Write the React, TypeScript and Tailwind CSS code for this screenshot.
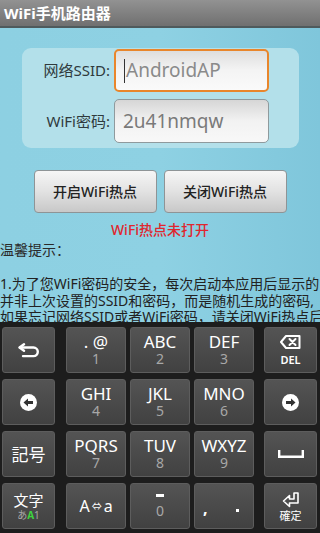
import type { ReactNode } from 'react';

const cjk = { fontFamily: '"Noto Sans", "Noto Sans CJK SC", sans-serif' };
const jp = { fontFamily: '"Noto Sans", "Noto Sans CJK JP", sans-serif' };

function Key({ w, children, className = '' }: { w: string; children?: ReactNode; className?: string }) {
  return (
    <div
      className={`${w} h-[46px] shrink-0 rounded-[3px] border border-[#5d5d5d] bg-gradient-to-b from-[#545454] to-[#414141] flex flex-col items-center justify-center text-white ${className}`}
    >
      {children}
    </div>
  );
}

function Letter({ top, num }: { top: string; num: string }) {
  return (
    <>
      <span className="text-[17px] leading-[18px]">{top}</span>
      <span className="text-[14px] leading-[16px] text-[#a8a8a8]">{num}</span>
    </>
  );
}

function Row({ keys }: { keys: ReactNode[] }) {
  return (
    <div className="flex pl-[2px]">
      <Key w="w-[53px]">{keys[0]}</Key>
      <div className="ml-[11px] flex gap-[4px]">
        <Key w="w-[60px]">{keys[1]}</Key>
        <Key w="w-[60px]">{keys[2]}</Key>
        <Key w="w-[60px]">{keys[3]}</Key>
      </div>
      <Key w="w-[53px] ml-[10px]">{keys[4]}</Key>
    </div>
  );
}

const CircleArrow = ({ dir }: { dir: 'l' | 'r' }) => (
  <svg width="17" height="17" viewBox="0 0 17 17">
    <circle cx="8.5" cy="8.5" r="8.5" fill="#fff" />
    <g transform={dir === 'r' ? 'translate(17 0) scale(-1 1)' : undefined}>
      <path d="M3.5 8.5 L8 4.5 V7 H13 V10 H8 V12.5 Z" fill="#333" />
    </g>
  </svg>
);

export default function App() {
  return (
    <div className="w-[320px] h-[533px] overflow-hidden flex flex-col bg-[#8bcfe2]" style={cjk}>
      {/* title bar */}
      <div className="h-[28px] shrink-0 bg-gradient-to-b from-[#929292] to-[#707070] border-b-2 border-[#4f5a5c] flex items-center pl-[4px]">
        <span className="text-white text-[15px] font-bold leading-none">WiFi手机路由器</span>
      </div>

      {/* content */}
      <div className="h-[294px] shrink-0 overflow-hidden bg-gradient-to-r from-[#8dd0e2] via-[#8ed1e3] to-[#7fc6db]">
        <div className="mt-[20px] ml-[22px] w-[277px] h-[100px] rounded-[9px] bg-[#b3e0ea] pt-[1px] flex flex-col gap-[7px]">
          <div className="flex items-center">
            <span className="w-[88px] text-right text-[15px] text-[#2f3a3d] leading-none">网络SSID:</span>
            <div className="ml-[4px] w-[155px] h-[43px] rounded-[5px] border-2 border-[#e9862c] bg-gradient-to-b from-[#dedede] via-[#f4f4f4] to-[#fafafa] flex items-center pl-[8px]">
              <span className="inline-block w-px h-[24px] bg-[#333]" />
              <span className="ml-px text-[19px] text-[#8a8a8a] leading-none">AndroidAP</span>
            </div>
          </div>
          <div className="flex items-center">
            <span className="w-[88px] text-right text-[15px] text-[#2f3a3d] leading-none">WiFi密码:</span>
            <div className="ml-[4px] w-[155px] h-[44px] rounded-[5px] border border-[#8f9a9d] bg-gradient-to-b from-[#d6d6d6] via-[#f2f2f2] to-[#f8f8f8] flex items-center pl-[8px]">
              <span className="text-[19px] text-[#7a7a7a] leading-none">2u41nmqw</span>
            </div>
          </div>
        </div>

        <div className="mt-[22px] flex justify-center gap-[7px]">
          {['开启WiFi热点', '关闭WiFi热点'].map(t => (
            <div
              key={t}
              className="w-[123px] h-[43px] rounded-[4px] border border-[#8e9496] bg-gradient-to-b from-[#f6f6f6] via-[#e2e2e2] to-[#c8c8c8] flex items-center justify-center text-[14px] font-medium text-[#222]"
            >
              {t}
            </div>
          ))}
        </div>

        <p className="mt-[8px] text-center text-[14px] leading-[18px] text-[#e0262e] font-medium">WiFi热点未打开</p>
        <p className="mt-[2px] text-[14px] leading-[18px] text-[#2a2a2a]">温馨提示：</p>
        <div className="mt-[17px] text-[14px] leading-[16.5px] text-[#222] whitespace-nowrap">
          <p>1.为了您WiFi密码的安全，每次启动本应用后显示的</p>
          <p>并非上次设置的SSID和密码，而是随机生成的密码,</p>
          <p>如果忘记网络SSID或者WiFi密码，请关闭WiFi热点后</p>
        </div>
      </div>

      {/* keyboard */}
      <div className="flex-1 bg-[#1d1d1d] pt-[5px] flex flex-col gap-[6px]" style={jp}>
        <Row
          keys={[
            <svg key="u" width="22" height="15" viewBox="0 0 22 15" fill="none" stroke="#fff" strokeWidth="2.4" strokeLinecap="round" strokeLinejoin="round">
              <path d="M6 1.3 L1.5 4.5 L6 7.7" />
              <path d="M2 4.5 H15.5 A4.3 4.3 0 0 1 15.5 13.1 H5" />
            </svg>,
            <Letter key="1" top=". @" num="1" />,
            <Letter key="2" top="ABC" num="2" />,
            <Letter key="3" top="DEF" num="3" />,
            <div key="d" className="flex flex-col items-center">
              <svg width="21" height="14" viewBox="0 0 21 14" fill="none" stroke="#fff" strokeWidth="2" strokeLinejoin="round">
                <path d="M6 1 H19.5 V13 H6 L1 7 Z" />
                <path d="M9.5 4 L15.5 10 M15.5 4 L9.5 10" strokeLinecap="round" />
              </svg>
              <span className="mt-[5px] text-[11px] leading-none font-semibold">DEL</span>
            </div>,
          ]}
        />
        <Row
          keys={[
            <CircleArrow key="l" dir="l" />,
            <Letter key="4" top="GHI" num="4" />,
            <Letter key="5" top="JKL" num="5" />,
            <Letter key="6" top="MNO" num="6" />,
            <CircleArrow key="r" dir="r" />,
          ]}
        />
        <Row
          keys={[
            <span key="k" className="text-[17px] leading-none">記号</span>,
            <Letter key="7" top="PQRS" num="7" />,
            <Letter key="8" top="TUV" num="8" />,
            <Letter key="9" top="WXYZ" num="9" />,
            <svg key="s" width="26" height="8" viewBox="0 0 26 8" fill="none" stroke="#fff" strokeWidth="2.4">
              <path d="M1.2 0 V6.8 H24.8 V0" />
            </svg>,
          ]}
        />
        <Row
          keys={[
            <div key="m" className="flex flex-col items-center">
              <span className="text-[15px] leading-[17px]">文字</span>
              <span className="text-[10px] leading-[12px] text-[#a8a8a8]">
                あ<span className="text-[#3ed33e] font-bold">A</span>1
              </span>
            </div>,
            <span key="a" className="text-[16px] leading-none flex items-center">
              A<span className="text-[10px] mx-[2px]">⇔</span>a
            </span>,
            <div key="0" className="flex flex-col items-center">
              <div className="w-[8px] h-[3px] bg-white mb-[7px]" />
              <span className="text-[14px] leading-none text-[#a8a8a8]">0</span>
            </div>,
            <div key="c" className="w-full h-full flex items-end justify-between px-[8px] pb-[12px] text-[16px] leading-none">
              <span className="font-bold">,</span>
              <span className="w-[3px] h-[3px] bg-white mb-[4px] mr-[6px]" />
            </div>,
            <div key="e" className="flex flex-col items-center">
              <svg width="18" height="16" viewBox="0 0 18 16" fill="none" stroke="#fff" strokeWidth="1.6" strokeLinejoin="round">
                <path d="M12 1 H16 V11 H7.5 V14.5 L1.5 9 L7.5 3.5 V7 H12 Z" />
              </svg>
              <span className="mt-[2px] text-[11px] leading-none">確定</span>
            </div>,
          ]}
        />
      </div>
    </div>
  );
}
